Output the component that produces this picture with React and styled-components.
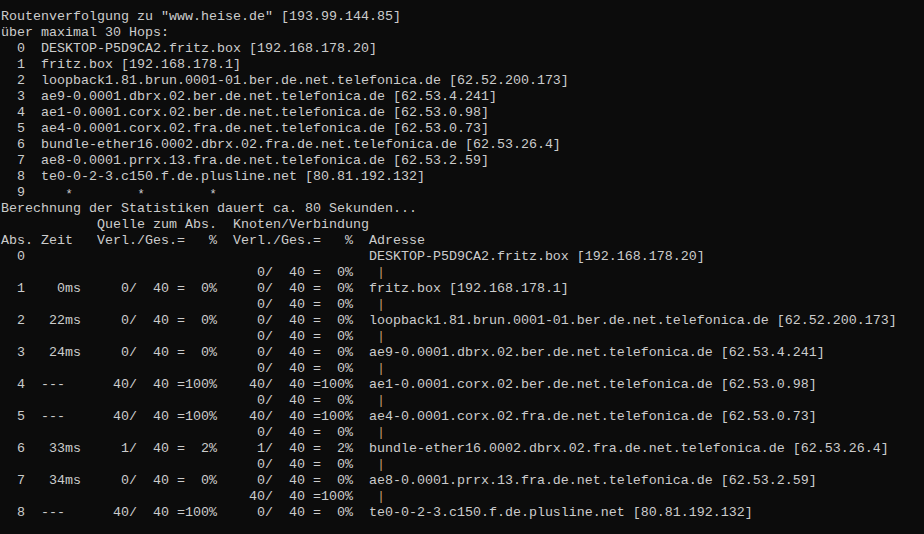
import React from "react";
import styled, { createGlobalStyle } from "styled-components";

const GlobalStyle = createGlobalStyle`
  html, body {
    margin: 0;
    padding: 0;
    background: #0c0c0c;
  }
`;

const trace = [
  "DESKTOP-P5D9CA2.fritz.box [192.168.178.20]",
  "fritz.box [192.168.178.1]",
  "loopback1.81.brun.0001-01.ber.de.net.telefonica.de [62.52.200.173]",
  "ae9-0.0001.dbrx.02.ber.de.net.telefonica.de [62.53.4.241]",
  "ae1-0.0001.corx.02.ber.de.net.telefonica.de [62.53.0.98]",
  "ae4-0.0001.corx.02.fra.de.net.telefonica.de [62.53.0.73]",
  "bundle-ether16.0002.dbrx.02.fra.de.net.telefonica.de [62.53.26.4]",
  "ae8-0.0001.prrx.13.fra.de.net.telefonica.de [62.53.2.59]",
  "te0-0-2-3.c150.f.de.plusline.net [80.81.192.132]",
];

// rtt, source lost, node lost, link lost (to next hop)
const stats = [
  null,
  { rtt: "0ms", src: 0, node: 0, link: 0 },
  { rtt: "22ms", src: 0, node: 0, link: 0 },
  { rtt: "24ms", src: 0, node: 0, link: 0 },
  { rtt: "---", src: 40, node: 40, link: 0 },
  { rtt: "---", src: 40, node: 40, link: 0 },
  { rtt: "33ms", src: 1, node: 1, link: 0 },
  { rtt: "34ms", src: 0, node: 0, link: 40 },
  { rtt: "---", src: 40, node: 0, link: null },
];

const SENT = 40;

const pad = (v, n) => String(v).padStart(n, " ");
const padEnd = (v, n) => String(v).padEnd(n, " ");

const loss = (lost) =>
  `${pad(lost, 4)}/${pad(SENT, 4)} =${pad(Math.floor((lost / SENT) * 100), 3)}%`;

const rttCell = (rtt) => (rtt === "---" ? padEnd(rtt, 5) : pad(rtt, 5));

const Console = styled.div`
  background: #0c0c0c;
  color: #cccccc;
  font-family: "Liberation Mono", "DejaVu Sans Mono", monospace;
  font-size: 13.33px;
  line-height: 16px;
  padding: 9px 0 0 1px;
  width: 924px;
  height: 534px;
  box-sizing: border-box;
  overflow: hidden;
`;

const Line = styled.div`
  white-space: pre;
  height: 16px;
`;

const Star = styled.span`
  display: inline-block;
  width: 8px;
  height: 16px;
  overflow: hidden;
  vertical-align: top;
  font-size: 12px;
  line-height: 21px;
  text-align: center;
`;

const Pipe = styled.span`
  color: #c49a6c;
`;

const HopLine = ({ n, name }) => <Line>{`${pad(n, 3)}  ${name}`}</Line>;

const LinkLine = ({ lost }) => (
  <Line>
    {`${" ".repeat(29)}${loss(lost)}   `}
    <Pipe>|</Pipe>
  </Line>
);

const StatLine = ({ n, s, name }) => (
  <Line>
    {s
      ? `${pad(n, 3)}  ${rttCell(s.rtt)}  ${loss(s.src)}  ${loss(s.node)}  ${name}`
      : `${pad(n, 3)}${" ".repeat(43)}${name}`}
  </Line>
);

export default function App() {
  return (
    <>
      <GlobalStyle />
      <Console>
        <Line>Routenverfolgung zu "www.heise.de" [193.99.144.85]</Line>
        <Line>über maximal 30 Hops:</Line>
        {trace.map((name, i) => (
          <HopLine key={name} n={i} name={name} />
        ))}
        <Line>
          {"  9     "}
          <Star>*</Star>
          {"        "}
          <Star>*</Star>
          {"        "}
          <Star>*</Star>
        </Line>
        <Line>Berechnung der Statistiken dauert ca. 80 Sekunden...</Line>
        <Line>{`${" ".repeat(12)}Quelle zum Abs.  Knoten/Verbindung`}</Line>
        <Line>{`${padEnd("Abs.", 5)}${padEnd("Zeit", 7)}Verl./Ges.=   %  Verl./Ges.=   %  Adresse`}</Line>
        {trace.map((name, i) => (
          <React.Fragment key={name}>
            <StatLine n={i} s={stats[i]} name={name} />
            {i === 0 && <LinkLine lost={0} />}
            {stats[i] && stats[i].link !== null && <LinkLine lost={stats[i].link} />}
          </React.Fragment>
        ))}
      </Console>
    </>
  );
}
